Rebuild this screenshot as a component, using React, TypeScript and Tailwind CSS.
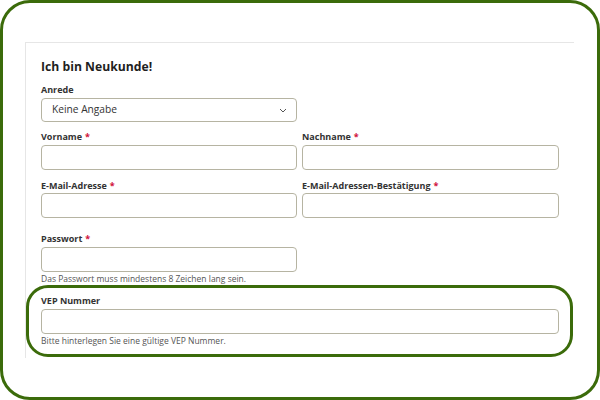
import React from 'react';

const font = { fontFamily: '"Open Sans", "Liberation Sans", sans-serif' };

const Label: React.FC<{ text: string; required?: boolean }> = ({ text, required }) => (
  <div className="h-[14px] text-[9px] leading-[14px] font-bold text-[#333333]">
    {text}
    {required && <span className="ml-[3px] text-[#d0103a]">*</span>}
  </div>
);

const Input: React.FC<{ className?: string }> = ({ className = '' }) => (
  <div className={`h-[25px] rounded-[4px] border border-[#b6b4a2] bg-white ${className}`} />
);

const Help: React.FC<{ text: string }> = ({ text }) => (
  <div className="h-[14px] text-[8.5px] leading-[14px] text-[#555555]">{text}</div>
);

export default function App() {
  return (
    <div className="relative h-[400px] w-[600px] bg-white" style={font}>
      <div className="h-full w-full rounded-[30px] border-[3px] border-[#3b6b0a] pl-[22px] pt-[39px]">
        <div className="h-[316px] w-[549px] border-l border-t border-[#e6e6e6] pl-[15px] pr-[15px]">
          <h2 className="mt-[14px] h-[20px] text-[12.2px] leading-[20px] font-bold text-[#1f1f1f]">
            Ich bin Neukunde!
          </h2>
          <div className="mt-[6px]">
            <Label text="Anrede" />
            <div className="mt-px flex h-[24px] w-[256px] items-center justify-between rounded-[4px] border border-[#b6b4a2] pl-[10px] pr-[9px] text-[10.2px] text-[#333333]">
              <span>Keine Angabe</span>
              <svg width="8" height="5" viewBox="0 0 8 5" fill="none">
                <path d="M1 1l3 3 3-3" stroke="#555" strokeWidth="1" />
              </svg>
            </div>
          </div>
          <div className="mt-[8px] grid grid-cols-[256px_257px] gap-x-[5px]">
            <div>
              <Label text="Vorname" required />
              <Input className="mt-px" />
            </div>
            <div>
              <Label text="Nachname" required />
              <Input className="mt-px" />
            </div>
            <div className="mt-[9px]">
              <Label text="E-Mail-Adresse" required />
              <Input />
            </div>
            <div className="mt-[9px]">
              <Label text="E-Mail-Adressen-Bestätigung" required />
              <Input />
            </div>
          </div>
          <div className="mt-[14px] w-[256px]">
            <Label text="Passwort" required />
            <Input className="mt-px" />
          </div>
          <Help text="Das Passwort muss mindestens 8 Zeichen lang sein." />
          <div className="mt-[8px]">
            <Label text="VEP Nummer" />
            <Input className="mt-px" />
            <Help text="Bitte hinterlegen Sie eine gültige VEP Nummer." />
          </div>
        </div>
      </div>
      <div className="pointer-events-none absolute left-[26px] top-[285px] h-[72px] w-[547px] rounded-[22px] border-[3px] border-[#3b6b0a]" />
    </div>
  );
}
